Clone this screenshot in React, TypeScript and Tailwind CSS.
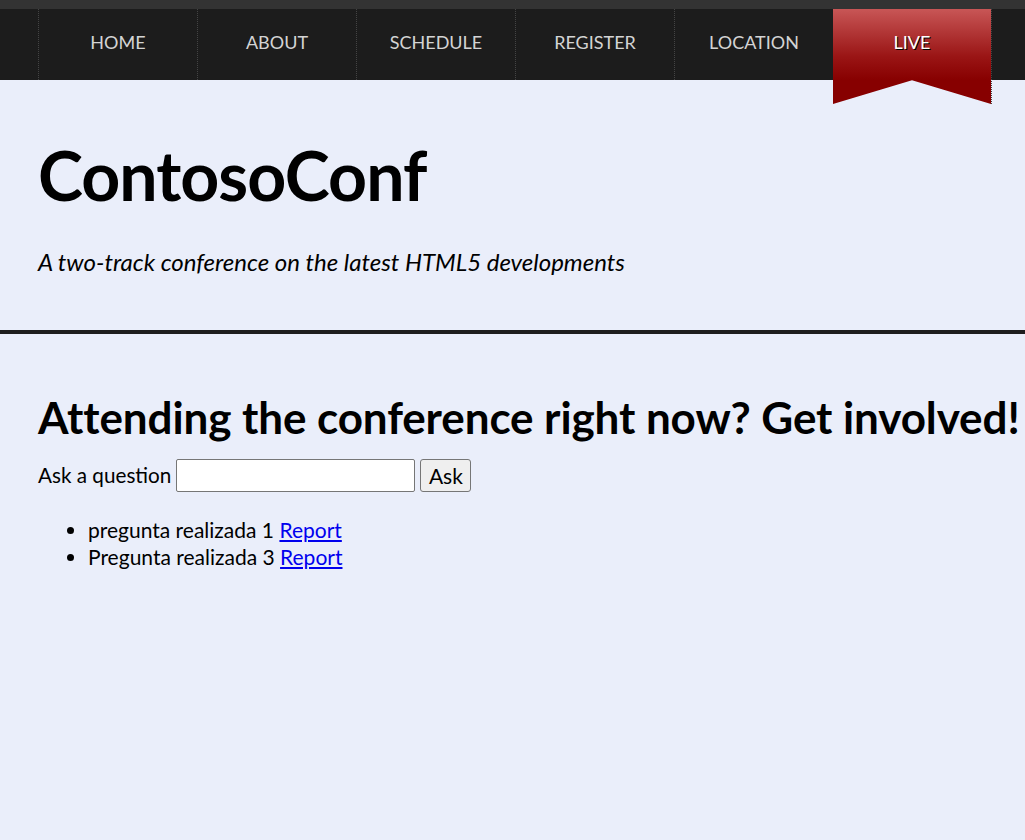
const navItems = ["HOME", "ABOUT", "SCHEDULE", "REGISTER", "LOCATION"];

const questions = ["pregunta realizada 1", "Pregunta realizada 3"];

export default function App() {
    return (
        <div className="min-h-[840px] bg-[#eaeefa] text-black font-['Lato','Open_Sans',sans-serif]">
            <div className="h-[9px] bg-[#333333]" />
            <nav className="h-[71px] bg-[#1c1c1c]">
                <ul className="flex items-start pl-[38px]">
                    {navItems.map((item) => (
                        <li
                            key={item}
                            className="w-[159px] h-[71px] pb-[4px] flex items-center justify-center border-l border-dotted border-[#444444] text-[18px] text-[#d4d4d4]"
                        >
                            {item}
                        </li>
                    ))}
                    <li className="relative z-10 w-[159px] h-[95px] border-r border-dotted border-[#444444]">
                        <div className="h-full w-full pt-[20px] text-center text-[18px] text-white [clip-path:polygon(0_0,100%_0,100%_100%,50%_75%,0_100%)] bg-[linear-gradient(to_bottom,#c85656_0%,#9a1515_50%,#870000_75%,#870000_100%)] [text-shadow:1px_1px_0_#000]">
                            LIVE
                        </div>
                    </li>
                </ul>
            </nav>

            <header className="px-[38px] pt-[61px] pb-[53px] border-b-4 border-[#1e1e1e]">
                <h1 className="text-[68px] font-bold leading-none tracking-[-1px]">ContosoConf</h1>
                <p className="mt-[38px] text-[24px] italic leading-[30px]">
                    A two-track conference on the latest HTML5 developments
                </p>
            </header>

            <section className="px-[38px] pt-[56px] whitespace-nowrap overflow-hidden">
                <h2 className="text-[44px] font-bold leading-[55px] tracking-[-0.1px]">
                    Attending the conference right now? Get involved!
                </h2>
                <form className="mt-[14px] flex items-center gap-[5px] text-[20.7px]" onSubmit={(e) => e.preventDefault()}>
                    <label htmlFor="question">Ask a question</label>
                    <input
                        id="question"
                        type="text"
                        className="w-[239px] h-[33px] bg-white border border-[#767676] rounded-[2px]"
                    />
                    <button className="h-[33px] w-[51px] bg-[#efefef] border border-[#767676] rounded-[3px] text-[21px] leading-none">
                        Ask
                    </button>
                </form>
                <ul className="mt-[24px] pl-[50px] list-disc text-[21px] leading-[27px]">
                    {questions.map((q) => (
                        <li key={q}>
                            {q}{" "}
                            <a href="#" className="text-[#0000ee] underline">
                                Report
                            </a>
                        </li>
                    ))}
                </ul>
            </section>
        </div>
    );
}
